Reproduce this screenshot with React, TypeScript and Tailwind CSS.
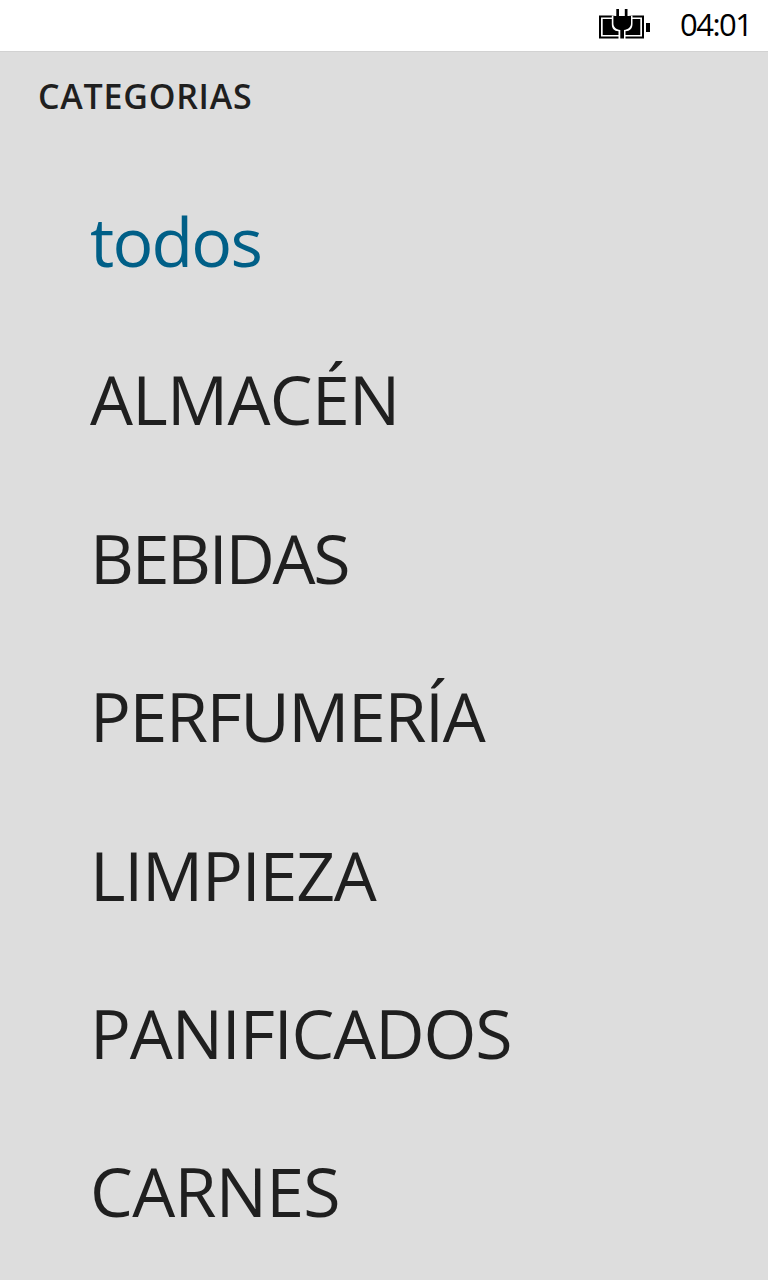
const items = [
  { name: 'todos', style: 'tracking-[-1.8px] text-[#005f87]' },
  { name: 'ALMACÉN', style: 'tracking-[-0.7px]' },
  { name: 'BEBIDAS', style: 'tracking-[-2.3px]' },
  { name: 'PERFUMERÍA', style: 'tracking-[-1.4px]' },
  { name: 'LIMPIEZA', style: 'tracking-[-1.2px]' },
  { name: 'PANIFICADOS', style: 'tracking-[-1.1px]' },
  { name: 'CARNES', style: 'tracking-[-0.7px]' },
];

function ChargingIcon() {
  return (
    <svg className="mt-[9px] h-[30px] w-[51px]" viewBox="0 0 51 30" aria-hidden="true">
      <path d="M0 6.5H45V29.5H0Z" fill="#000" />
      <path d="M2 8.5H43V27.5H2Z" fill="#fff" />
      <path d="M3.7 10H41.3V26H3.7Z" fill="#000" />
      <path d="M47 14H51V23H47Z" fill="#000" />
      <path d="M15.5 4H30.5V6.5H33.5V15C33.5 19.5 31 22 26.5 22.3V30H19.5V22.3C15 22 12.8 19.5 12.8 15V6.5H15.5Z" fill="#fff" />
      <path d="M17.3 0H20V7H25.8V0H28.5V7H32V14.5C32 18 29 20.7 25 21V29.5H21.3V21C17.3 20.7 14.4 18 14.4 14.5V7H17.3Z" fill="#000" />
    </svg>
  );
}

export default function App() {
  return (
    <div className="h-[1280px] w-[768px] overflow-hidden bg-[#dddddd] font-['Open_Sans',sans-serif] text-[#1f1f1f]">
      <header className="flex h-[51px] items-start bg-white pl-[599px] text-black">
        <ChargingIcon />
        <span className="ml-[30px] text-[31px] leading-[49px] tracking-[-1.5px]">04:01</span>
      </header>
      <h1 className="border-t border-[#d2d2d2] pt-[22px] pl-[38px] text-[34px] leading-[44px] font-semibold tracking-[0.75px]"><span>CATEGORIAS</span></h1>
      <ul className="mt-[44px] pl-[90px]">
        {items.map((item) => (
          <li key={item.name} className="h-[158.4px] text-[68px] leading-[158px]"><span className={item.style}>{item.name}</span></li>
        ))}
      </ul>
    </div>
  );
}
